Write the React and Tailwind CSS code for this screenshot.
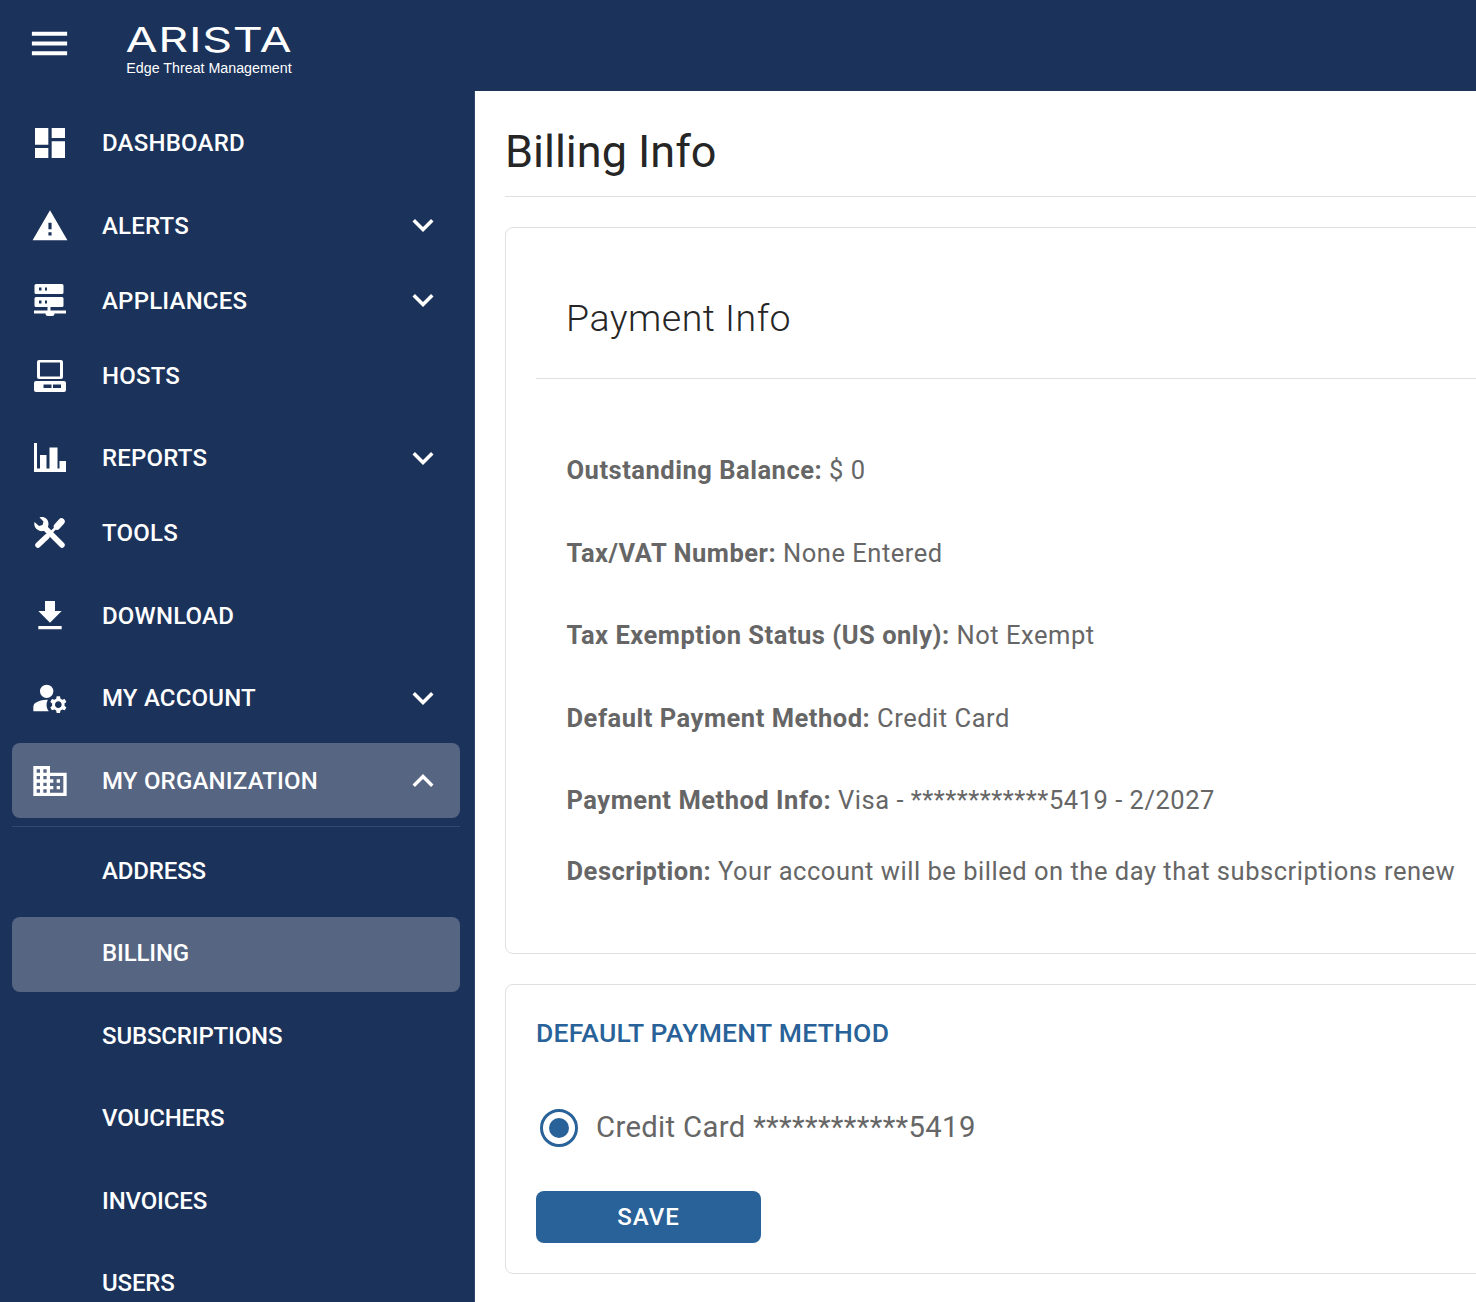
import React from "react";
import {
  MdMenu,
  MdDashboard,
  MdWarning,
  MdGetApp,
  MdManageAccounts,
  MdDomain,
  MdExpandMore,
  MdExpandLess,
} from "react-icons/md";

const ServerIcon = () => (
  <svg viewBox="0 0 32 33" className="w-8 h-[33px]" fill="currentColor">
    <path
      fillRule="evenodd"
      d="M2 0h26a1.500 1.500 0 0 1 1.500 1.500v7a1.500 1.500 0 0 1-1.500 1.500H2a1.500 1.500 0 0 1-1.500-1.500v-7A1.500 1.500 0 0 1 2 0zM5 3.500v3h2.500v-3zM11 3.500v3h2v-3zM2 13h26a1.500 1.500 0 0 1 1.500 1.500v7a1.500 1.500 0 0 1-1.500 1.500H2a1.500 1.500 0 0 1-1.500-1.500v-7A1.500 1.500 0 0 1 2 13zM5 16.500v3h2.500v-3zM11 16.500v3h2v-3z"
    />
    <path d="M13.500 23h3v3.500H32v3H20.500a2.500 2.500 0 0 1-2.500 2.500h-4a2.500 2.500 0 0 1-2.500-2.500H0v-3h13.500z" />
  </svg>
);

const HostIcon = () => (
  <svg viewBox="0 0 32 32" className="w-8 h-8" fill="currentColor">
    <path
      fillRule="evenodd"
      d="M5 0h22a2 2 0 0 1 2 2v15a2 2 0 0 1-2 2H5a2 2 0 0 1-2-2V2a2 2 0 0 1 2-2zM6 2.500v14h20v-14z"
    />
    <path
      fillRule="evenodd"
      d="M2 21h28a2 2 0 0 1 2 2v7a2 2 0 0 1-2 2H2a2 2 0 0 1-2-2v-7a2 2 0 0 1 2-2zM9.500 24.500v3.500h8v-3.500zM19 24.500v3.500h8v-3.500z"
    />
  </svg>
);

const ReportIcon = () => (
  <svg viewBox="0 0 32 29" className="w-8 h-[29px]" fill="currentColor">
    <path d="M0 0h3v25.500h3V12h6.500v13.500h3V4.500h8v21h2V18H32v11H0z" />
  </svg>
);

const ToolsIcon = () => (
  <svg viewBox="0 0 32 32" className="w-8 h-8" fill="currentColor" stroke="currentColor" strokeLinecap="round">
    {/* wrench */}
    <path stroke="none" d="M0.500 5l4.500 4 3.500-1L9.500 4.500 5.500 0.500C9.500-1 14.500 1.500 14.500 7c0 1-.2 2-.7 3L10 13.800C5 15.500-1 11 0.500 5z" />
    <path fill="none" strokeWidth="5.500" d="M10.500 10.500L28 28" />
    {/* screwdriver */}
    <path fill="none" strokeWidth="6.500" d="M23 9.500L27.500 4.500" />
    <path fill="none" strokeWidth="2.500" d="M23 9.500L17 15.500" />
    <path fill="none" strokeWidth="5.500" d="M13 19.500L4 28" />
  </svg>
);

const icon40 = "w-10 h-10";

const mainItems = [
  { label: "DASHBOARD", icon: <MdDashboard className={icon40} />, rowClass: "mt-[14px]" },
  { label: "ALERTS", icon: <MdWarning className="w-[38px] h-[38px]" />, chevron: true, chevronClass: "mb-[2px]", rowClass: "mt-[8px]" },
  { label: "APPLIANCES", icon: <ServerIcon />, chevron: true, chevronClass: "mb-[2px]", rowClass: "" },
  { label: "HOSTS", icon: <HostIcon />, rowClass: "" },
  { label: "REPORTS", icon: <ReportIcon />, chevron: true, rowClass: "mt-[7px]" },
  { label: "TOOLS", icon: <ToolsIcon />, rowClass: "" },
  { label: "DOWNLOAD", icon: <MdGetApp className={icon40} />, rowClass: "mt-[8px]" },
  { label: "MY ACCOUNT", icon: <MdManageAccounts className={icon40} />, chevron: true, rowClass: "mt-[7px]" },
];

const subItems = [
  { label: "ADDRESS", rowClass: "mt-[6px]", textClass: "" },
  { label: "BILLING", rowClass: "mt-[9px] bg-[#566582]", textClass: "mb-[4px]" },
  { label: "SUBSCRIPTIONS", rowClass: "mt-[6px]", textClass: "" },
  { label: "VOUCHERS", rowClass: "mt-[7px]", textClass: "" },
  { label: "INVOICES", rowClass: "mt-[8px]", textClass: "" },
  { label: "USERS", rowClass: "mt-[7px]", textClass: "" },
];

const NavRow = ({ label, icon, chevron, chevronClass = "", open, rowClass, textClass }) => (
  <div className={`flex items-center h-[75px] shrink-0 ml-3 mr-[14px] rounded-lg pl-[18px] pr-[16px] ${rowClass}`}>
    <span className="w-10 h-10 flex items-center justify-center shrink-0">{icon}</span>
    <span className={`ml-[32px] text-[24px] font-medium leading-none flex-1 ${textClass}`}>{label}</span>
    {chevron && !open && <MdExpandMore className={`w-[42px] h-[42px] ${chevronClass}`} />}
    {open && <MdExpandLess className="w-[42px] h-[42px]" />}
  </div>
);

const InfoLine = ({ label, value, rowClass }) => (
  <p className={`text-[25.5px] leading-[38px] tracking-[0.52px] text-[#666666] ${rowClass}`}>
    <span className="font-bold">{label}:</span> {value}
  </p>
);

export default function App() {
  return (
    <div className="h-[1302px] w-[1476px] overflow-hidden flex flex-col bg-white font-['Roboto',sans-serif]">
      {/* header */}
      <header className="h-[91px] shrink-0 bg-[#1b325b] text-white flex items-start">
        <MdMenu className="w-[47px] h-[47px] ml-[26px] mt-[20px]" />
        <div className="ml-[53px] mt-[22px] w-[166px] flex flex-col items-center">
          <span className="font-['Inter',sans-serif] font-normal text-[34px] leading-[36px] tracking-[0.5px] scale-x-[1.37]">
            ARISTA
          </span>
          <span className="font-['Liberation_Sans',sans-serif] text-[14.25px] leading-[20px] whitespace-nowrap">
            Edge Threat Management
          </span>
        </div>
      </header>

      <div className="flex flex-1 min-h-0">
        {/* sidebar */}
        <aside className="w-[475px] shrink-0 bg-[#1b325b] border-r border-[#2f4569] text-white flex flex-col overflow-hidden">
          {mainItems.map((item) => (
            <NavRow key={item.label} {...item} textClass="tracking-[0.2px]" />
          ))}
          <NavRow
            label="MY ORGANIZATION"
            icon={<MdDomain className={icon40} />}
            open
            rowClass="mt-[8px] bg-[#566582]"
            textClass="tracking-[0.2px]"
          />
          <div className="h-px ml-3 mr-[14px] mt-[8px] bg-[#33496f] shrink-0" />
          {subItems.map((item) => (
            <NavRow
              key={item.label}
              label={item.label}
              icon={null}
              rowClass={item.rowClass}
              textClass={`tracking-[-0.15px] ${item.textClass}`}
            />
          ))}
        </aside>

        {/* content */}
        <main className="flex-1 min-w-0 overflow-hidden pl-[30px]">
          <div className="w-[1200px]">
            <h1 className="h-[106px] border-b border-[#e0e0e0] text-[45px] leading-[122px] text-[#262626]">
              Billing Info
            </h1>

            <section className="mt-[30px] h-[727px] border border-[#e0e0e0] rounded-lg">
              <h2 className="ml-[30px] h-[151px] pl-[30px] pt-[65px] border-b border-[#e0e0e0] text-[37.5px] leading-[50px] font-light tracking-[0.5px] text-[#262626]">
                Payment Info
              </h2>
              <div className="pl-[60.5px] pt-[72px]">
                <InfoLine label="Outstanding Balance" value="$ 0" />
                <InfoLine label="Tax/VAT Number" value="None Entered" rowClass="mt-[45px]" />
                <InfoLine label="Tax Exemption Status (US only)" value="Not Exempt" rowClass="mt-[44px]" />
                <InfoLine label="Default Payment Method" value="Credit Card" rowClass="mt-[45px]" />
                <InfoLine label="Payment Method Info" value="Visa - ************5419 - 2/2027" rowClass="mt-[44px]" />
                <InfoLine
                  label="Description"
                  value="Your account will be billed on the day that subscriptions renew"
                  rowClass="mt-[33px]"
                />
              </div>
            </section>

            <section className="mt-[30px] h-[290px] border border-[#e0e0e0] rounded-lg pl-[30px]">
              <h3 className="pt-[30px] text-[26.5px] leading-[36px] font-medium tracking-[0.27px] text-[#286298]">
                DEFAULT PAYMENT METHOD
              </h3>
              <div className="mt-[55px] flex items-center h-[44px]">
                <span className="ml-[4px] w-[38px] h-[38px] rounded-full border-[3px] border-[#286298] flex items-center justify-center">
                  <span className="w-[20px] h-[20px] rounded-full bg-[#286298]" />
                </span>
                <span className="ml-[18px] text-[29.25px] tracking-[0.35px] text-[#666666]">
                  Credit Card ************5419
                </span>
              </div>
              <button className="mt-[41px] w-[225px] h-[52px] bg-[#286298] rounded-lg text-white text-[24px] font-medium tracking-[1px]">
                SAVE
              </button>
            </section>
          </div>
        </main>
      </div>
    </div>
  );
}
